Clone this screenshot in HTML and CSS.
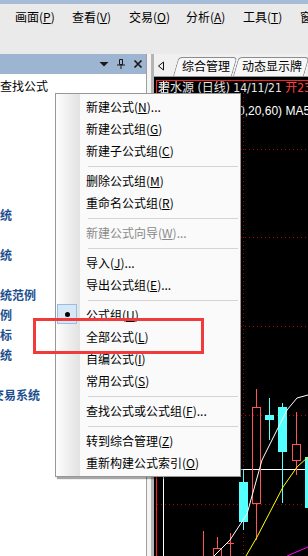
FILE: index.html
```html
<!DOCTYPE html>
<html lang="zh-CN">
  <head>
    <meta charset="UTF-8" />
    <title>公式管理</title>
    <link rel="stylesheet" href="styles.css">
  </head>
  <body>
    <div class="titlebar"></div>
    <div class="menubar">
      <span>画面(<u>P</u>)</span>
      <span>查看(<u>V</u>)</span>
      <span>交易(<u>O</u>)</span>
      <span>分析(<u>A</u>)</span>
      <span>工具(<u>T</u>)</span>
      <span>窗口(<u>W</u>)</span>
    </div>

    <div class="workspace">
      <div class="side">
        <div class="side-head">
          <svg width="12" height="12" viewBox="0 0 12 12"><polygon points="1.5,4 10.5,4 6,8.5" fill="#1a1a1a" /></svg>
          <svg width="12" height="12" viewBox="0 0 12 12">
            <path d="M4.5 1.5h3v5h-3z M7.5 1.5v5" fill="none" stroke="#1a1a1a" />
            <path d="M2 7h8 M6 7v4" fill="none" stroke="#1a1a1a" />
          </svg>
          <svg width="12" height="12" viewBox="0 0 12 12"><path d="M2.5 2.5l7 7 M9.5 2.5l-7 7" stroke="#1a1a1a" stroke-width="1.7" /></svg>
        </div>
        <div class="side-body">
          <div class="search">查找公式</div>
          <ul class="tree">
            <li></li>
            <li></li>
            <li></li>
            <li></li>
            <li></li>
            <li><span class="lv1">专家系统</span></li>
            <li></li>
            <li><span class="lv1">选股系统</span></li>
            <li></li>
            <li><span class="lv1">专家系统范例</span></li>
            <li><span class="lv1">选股范例</span></li>
            <li><span class="lv1">技术指标</span></li>
            <li><span class="lv1">五彩系统</span></li>
            <li></li>
            <li><span class="lv2">交易系统</span></li>
          </ul>
        </div>
      </div>
      <div class="splitter"></div>
      <div class="view">
        <div class="tabs">
          <svg class="tab-arrow" width="8" height="10" viewBox="0 0 8 10"><polygon points="6.5,1 1.5,5 6.5,9" fill="none" stroke="#111" /></svg>
          <span class="tab">综合管理</span>
          <span class="tab second">动态显示牌</span>
        </div>
        <div class="chart">
          <svg class="chart-canvas" width="154" height="479" viewBox="0 0 154 479">
            <g stroke="#b40000" stroke-dasharray="1 3">
              <line x1="3" y1="72.5" x2="154" y2="72.5" />
              <line x1="3" y1="160.5" x2="154" y2="160.5" />
              <line x1="3" y1="249.5" x2="154" y2="249.5" />
              <line x1="3" y1="338.5" x2="154" y2="338.5" />
              <line x1="3" y1="427.5" x2="154" y2="427.5" />
              <line x1="89.5" y1="4" x2="89.5" y2="479" />
            </g>
            <rect x="2.5" y="3.5" width="170" height="490" fill="none" stroke="#ff2020" />
            <g stroke="#fff">
              <line x1="3" y1="392.5" x2="154" y2="392.5" />
              <line x1="9.5" y1="4" x2="9.5" y2="479" />
            </g>
            <g stroke="#ff5454" fill="none">
              <line x1="102.5" y1="312" x2="102.5" y2="331" />
              <line x1="102.5" y1="427" x2="102.5" y2="463" />
              <rect x="98.5" y="330.5" width="8" height="96" />
              <line x1="142.5" y1="335" x2="142.5" y2="368" />
              <line x1="142.5" y1="384" x2="142.5" y2="398" />
              <rect x="138.5" y="367.5" width="8" height="16" />
              <line x1="63.5" y1="460" x2="63.5" y2="472" />
              <rect x="59.5" y="471.5" width="8" height="12" />
              <line x1="72" y1="466.5" x2="80" y2="466.5" />
              <line x1="76.5" y1="456" x2="76.5" y2="479" />
              <line x1="49.5" y1="454" x2="49.5" y2="479" />
            </g>
            <g fill="#54ffff" stroke="#54ffff">
              <line x1="115.5" y1="321" x2="115.5" y2="363" />
              <rect x="111" y="338" width="9" height="5" stroke="none" />
              <line x1="128.5" y1="326" x2="128.5" y2="426" />
              <rect x="124" y="330" width="9" height="45" stroke="none" />
              <line x1="89.5" y1="393" x2="89.5" y2="453" />
              <rect x="85" y="405" width="9" height="40" stroke="none" />
              <rect x="151" y="380" width="9" height="51" stroke="none" />
            </g>
            <polyline points="60,479 76,463 93,437 108,383 123,353 133,333 143,321 154,318" fill="none" stroke="#fff" />
            <polyline points="92,479 103,460 129,410 143,390 154,380" fill="none" stroke="#ffff00" />
            <polyline points="133,479 154,470" fill="none" stroke="#ff00ff" />
          </svg>
          <div class="chart-title">碧水源 (日线) 14/11/21 <span class="up">开23.85 高24.60</span></div>
          <div class="chart-ma">均线 MA(5,10,20,60) MA5:23.61</div>
        </div>
      </div>
    </div>

    <div class="popup">
      <div class="popup-item">新建公式(<u>N</u>)...</div>
      <div class="popup-item">新建公式组(<u>G</u>)</div>
      <div class="popup-item">新建子公式组(<u>C</u>)</div>
      <div class="popup-sep"></div>
      <div class="popup-item">删除公式组(<u>M</u>)</div>
      <div class="popup-item">重命名公式组(<u>R</u>)</div>
      <div class="popup-sep"></div>
      <div class="popup-item disabled">新建公式向导(<u>W</u>)...</div>
      <div class="popup-sep"></div>
      <div class="popup-item">导入(<u>J</u>)...</div>
      <div class="popup-item">导出公式组(<u>E</u>)...</div>
      <div class="popup-sep"></div>
      <div class="popup-item checked">公式组(<u>U</u>)</div>
      <div class="popup-item">全部公式(<u>L</u>)</div>
      <div class="popup-item">自编公式(<u>I</u>)</div>
      <div class="popup-item">常用公式(<u>S</u>)</div>
      <div class="popup-sep"></div>
      <div class="popup-item">查找公式或公式组(<u>F</u>)...</div>
      <div class="popup-sep"></div>
      <div class="popup-item">转到综合管理(<u>Z</u>)</div>
      <div class="popup-item">重新构建公式索引(<u>O</u>)</div>
    </div>

    <div class="callout"></div>
  </body>
</html>
```

FILE: styles.css
```css
body {
  margin: 0;
  height: 100vh;
  display: flex;
  flex-direction: column;
  overflow: hidden;
  font-family: "Noto Sans CJK SC", sans-serif;
  font-size: 12px;
  color: #000;
}
.titlebar {
  height: 4px;
  background: #a6bbd6;
}
.menubar {
  height: 50px;
  box-sizing: border-box;
  padding: 3px 0 0 15px;
  display: flex;
  align-items: flex-start;
  background: #eaeaea;
}
.menubar span {
  flex: none;
  width: 57px;
  line-height: 20px;
  white-space: nowrap;
}
.workspace {
  flex: 1;
  display: flex;
  min-height: 0;
}
.side {
  width: 147px;
  display: flex;
  flex-direction: column;
  background: #fff;
  border-right: 1px solid #a0a0a0;
  box-sizing: border-box;
}
.side-head {
  height: 20px;
  flex: none;
  display: flex;
  justify-content: flex-end;
  align-items: center;
  gap: 5px;
  padding-right: 2px;
  background: #9db5d1;
}
.side-body {
  flex: 1;
  overflow: hidden;
}
.search {
  height: 23px;
  line-height: 23px;
  white-space: nowrap;
}
.tree {
  list-style: none;
  margin: 8px 0 0;
  padding: 0;
}
.tree li {
  height: 20px;
  line-height: 20px;
  white-space: nowrap;
  color: #1d4f8f;
  font-weight: bold;
}
.tree .lv1 {
  margin-left: -36px;
}
.tree .lv2 {
  margin-left: -8px;
}
.splitter {
  width: 7px;
  flex: none;
  box-sizing: border-box;
  background: #f4f4f4;
  border-right: 3px solid #b4b4b4;
}
.view {
  flex: 1;
  display: flex;
  flex-direction: column;
  min-width: 0;
}
.tabs {
  height: 23px;
  flex: none;
  box-sizing: border-box;
  padding-left: 3px;
  display: flex;
  align-items: flex-end;
  position: relative;
  z-index: 0;
  background: #f0f0f0;
  border-bottom: 1px solid #9a9a9a;
  white-space: nowrap;
}
.tab-arrow {
  align-self: center;
  margin: 2px 8px 0 0;
}
.tab {
  position: relative;
  height: 19px;
  box-sizing: border-box;
  padding: 0 5px 2px 9px;
  line-height: 17px;
}
.tab::before {
  content: "";
  position: absolute;
  top: 0;
  bottom: 0;
  left: 0;
  right: 3px;
  border: 1px solid #8d8d8d;
  border-bottom: none;
  border-radius: 4px 4px 0 0;
  background: #f7f7f7;
  transform: skewX(-16deg);
  transform-origin: bottom left;
  z-index: -1;
}
.tab.second {
  margin-left: -2px;
}
.chart {
  flex: 1;
  position: relative;
  overflow: hidden;
  background: #000;
  font-family: "Liberation Sans", "Noto Sans CJK SC", sans-serif;
  white-space: nowrap;
}
.chart-canvas {
  position: absolute;
  left: 0;
  top: 0;
}
.chart-title {
  position: relative;
  padding: 3px 0 0 4px;
  line-height: 16px;
  color: #e6e6e6;
  font-family: "DejaVu Sans Condensed", "Noto Sans CJK SC", sans-serif;
}
.chart-title .up {
  color: #ff4040;
}
.chart-ma {
  position: relative;
  margin-top: 7px;
  padding-left: 18px;
  line-height: 16px;
  color: #fff;
}
.popup {
  position: absolute;
  left: 55px;
  top: 93px;
  width: 186px;
  box-sizing: border-box;
  padding: 2px 0;
  border: 1px solid #979797;
  background: linear-gradient(to right, #fdfdfd 0, #e2e2e2 24px, #fafafa 24px);
  box-shadow: 2px 2px 1px rgba(0, 0, 0, 0.35);
}
.popup-item {
  position: relative;
  line-height: 22px;
  padding-left: 30px;
  white-space: nowrap;
}
.popup-item.disabled {
  color: #8a8a8a;
}
.popup-item.checked::before {
  content: "";
  position: absolute;
  left: 1px;
  top: 0;
  width: 20px;
  height: 20px;
  box-sizing: border-box;
  border: 1px solid #93bfe9;
  background: #d8e7f6;
}
.popup-item.checked::after {
  content: "";
  position: absolute;
  left: 9px;
  top: 8px;
  width: 5px;
  height: 5px;
  border-radius: 50%;
  background: #000;
}
.popup-sep {
  height: 1px;
  margin: 4px 2px 3px 32px;
  background: #d4d4d4;
}
.callout {
  position: absolute;
  left: 33px;
  top: 318px;
  width: 171px;
  height: 36px;
  box-sizing: border-box;
  border: 3px solid #ef3b3b;
}
```
